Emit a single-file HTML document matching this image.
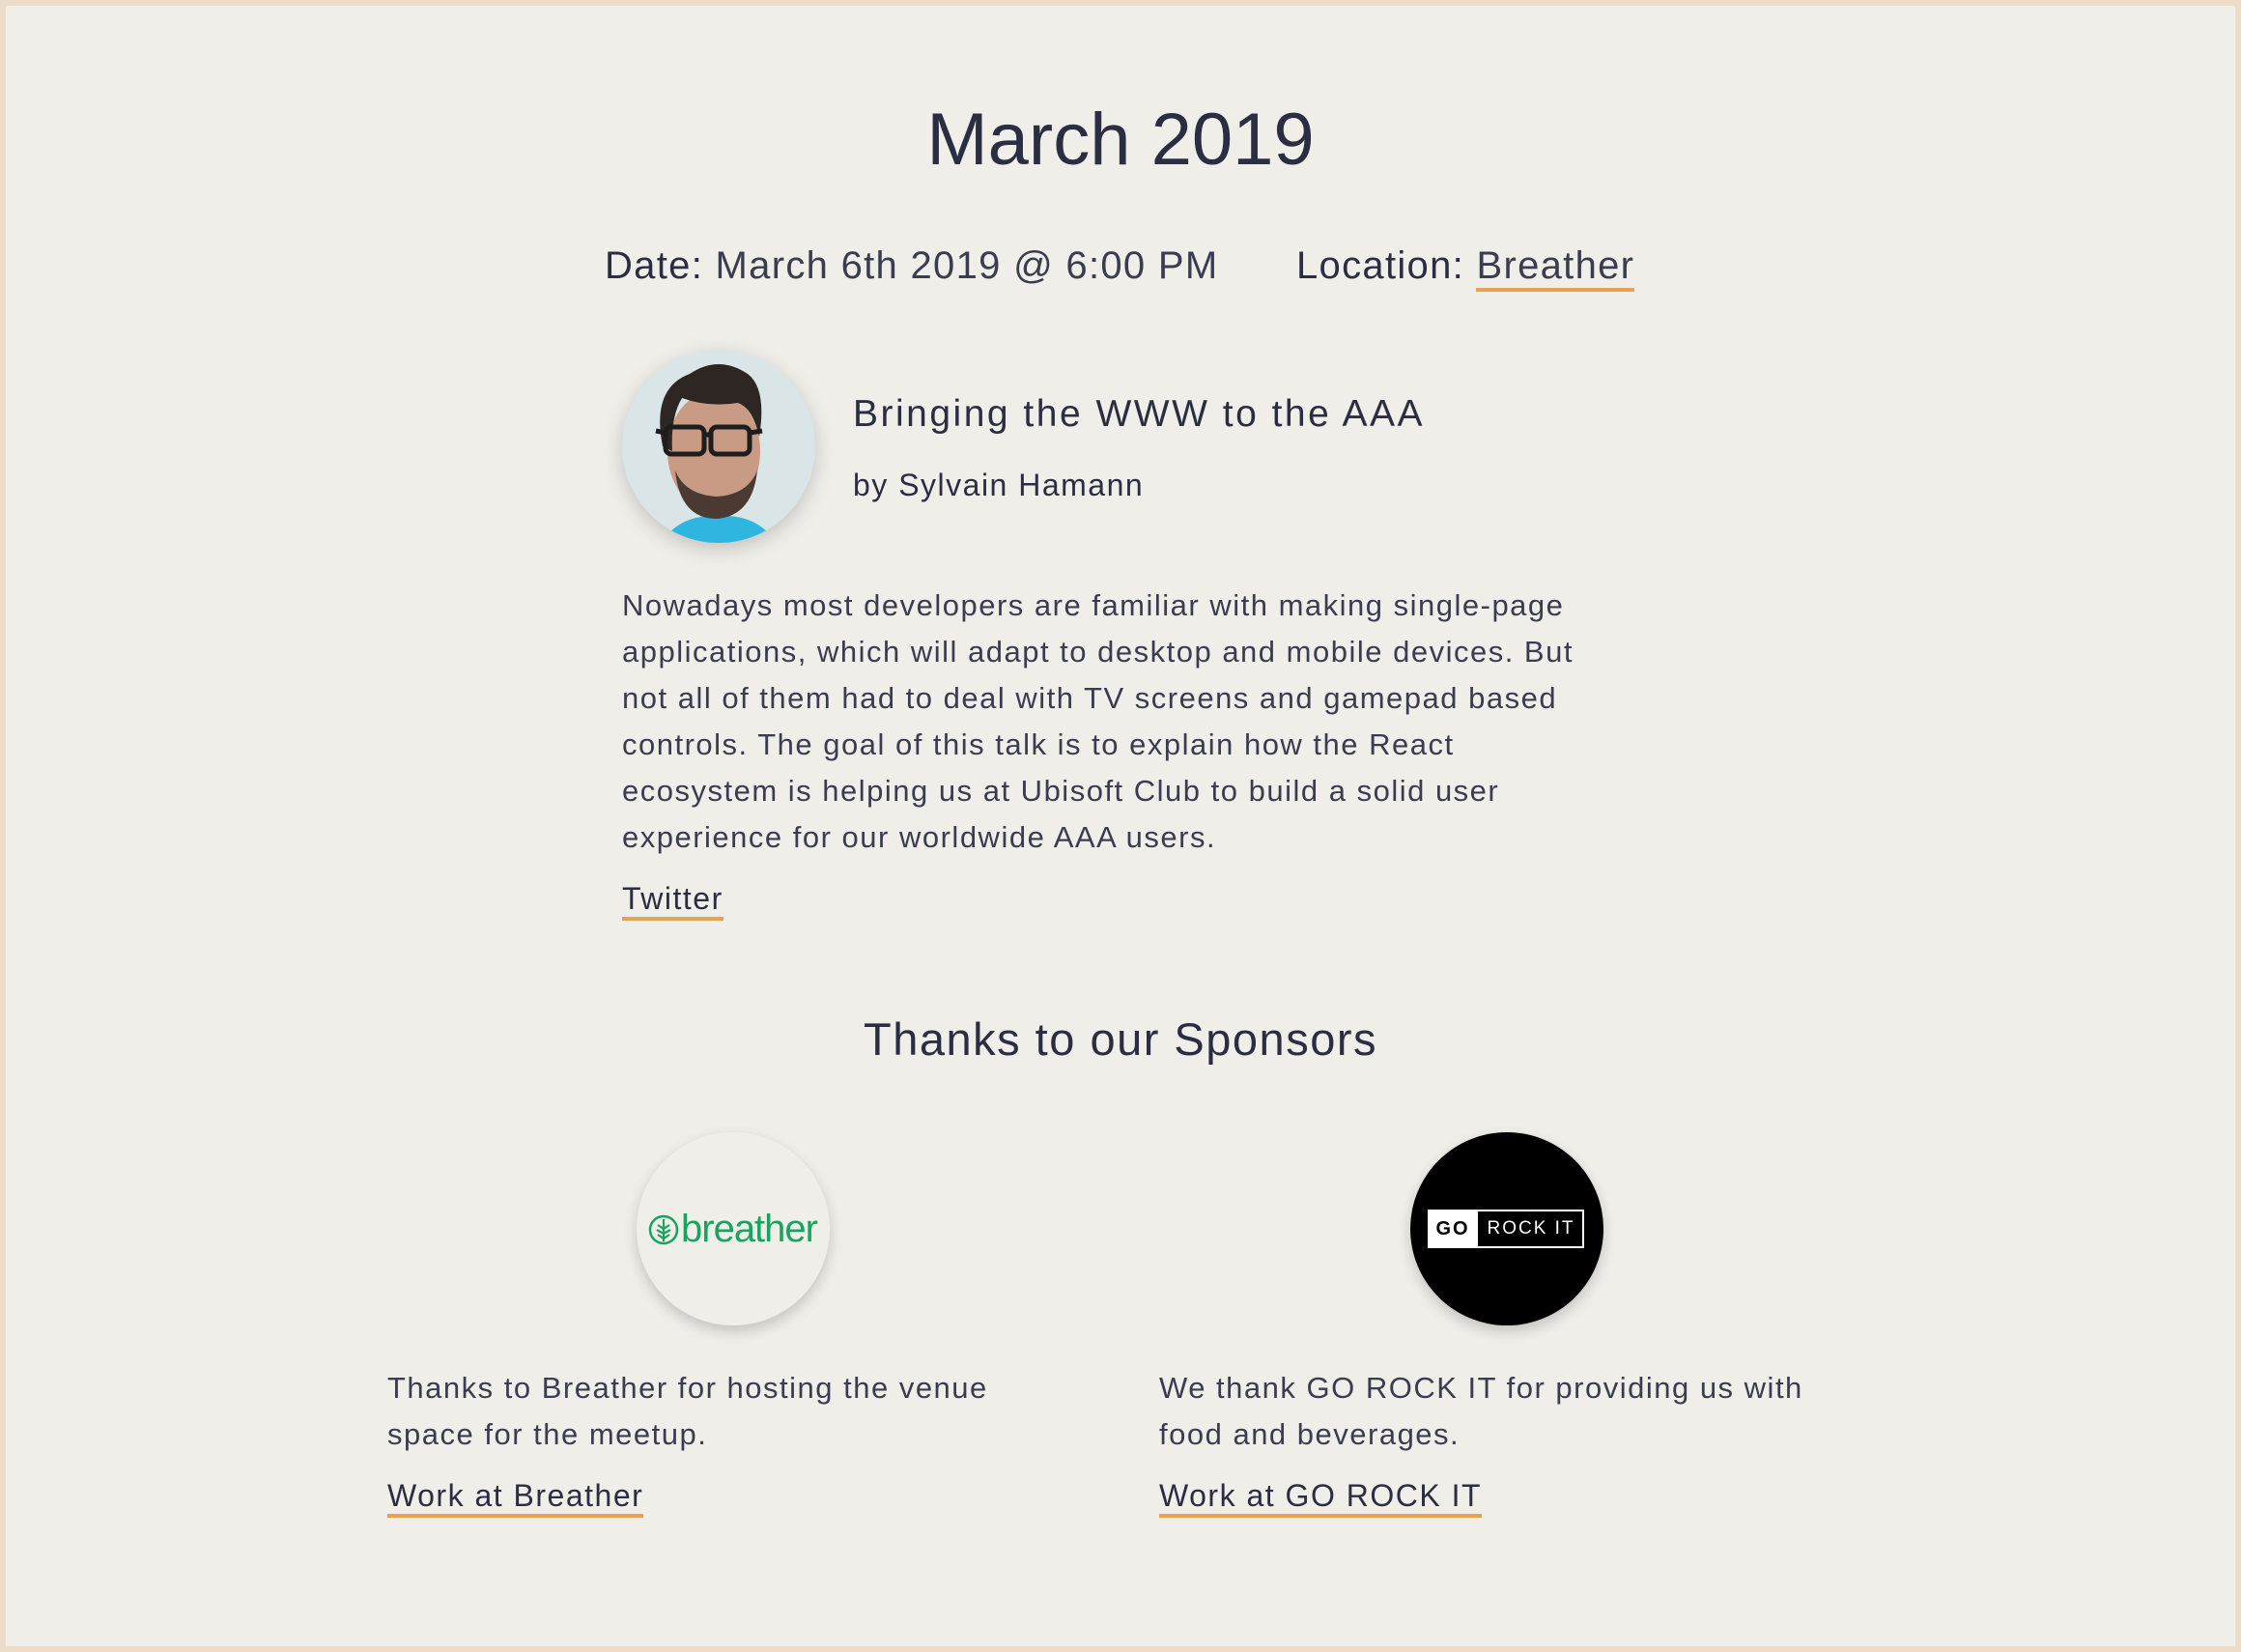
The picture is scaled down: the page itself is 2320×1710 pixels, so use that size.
<!DOCTYPE html>
<html><head><meta charset="utf-8"><style>
html,body{margin:0;padding:0}
body{width:2320px;height:1710px;background:#f0eee9;position:relative;overflow:hidden;font-family:"Liberation Sans",sans-serif;color:#2b2d42;letter-spacing:1.5px}
.frame{position:absolute;left:0;top:0;width:2308px;height:1698px;border:6px solid #ecdcc8}
.a{position:absolute;white-space:nowrap}
.u{border-bottom:4px solid #e3a352;padding-bottom:1px}
p{margin:0}
</style></head><body>
<div class="frame"></div>
<div class="a" style="left:0;width:2320px;text-align:center;top:100px;font-size:76px;line-height:90px;letter-spacing:0">March 2019</div>
<div class="a" style="left:626px;top:250px;font-size:40px;line-height:50px;letter-spacing:1.3px"><span style="font-weight:500">Date:</span> <span style="color:#3a3c50">March 6th 2019 @ 6:00 PM</span></div>
<div class="a" style="left:1342px;top:250px;font-size:40px;line-height:50px;letter-spacing:1.3px">Location: <span class="u" style="color:#3a3c50">Breather</span></div>

<svg class="a" style="left:644px;top:362px;filter:drop-shadow(0 6px 10px rgba(0,0,0,.18))" width="200" height="200" viewBox="0 0 200 200">
<defs><clipPath id="c"><circle cx="100" cy="100" r="100"/></clipPath></defs>
<g clip-path="url(#c)">
<rect width="200" height="200" fill="#d9e5e6"/>
<path d="M40 200 Q60 170 100 172 Q140 170 160 200Z" fill="#2fb6e0"/>
<ellipse cx="95" cy="105" rx="48" ry="62" fill="#c99a84"/>
<path d="M55 125 Q60 175 98 175 Q135 172 140 125 Q130 150 98 152 Q65 150 55 125Z" fill="#4a3a32"/>
<path d="M42 100 Q30 40 70 25 Q100 5 130 25 Q150 40 142 90 Q135 60 120 55 Q90 60 62 50 Q50 70 52 105Z" fill="#2e2622"/>
<rect x="45" y="80" width="40" height="28" rx="6" fill="none" stroke="#1d1d1d" stroke-width="5"/>
<rect x="92" y="80" width="40" height="28" rx="6" fill="none" stroke="#1d1d1d" stroke-width="5"/>
<path d="M85 88 L92 88 M132 86 L145 84 M45 86 L35 84" stroke="#1d1d1d" stroke-width="5"/>
</g></svg>

<div class="a" style="left:883px;top:404px;font-size:39px;line-height:50px;font-weight:500;letter-spacing:2.5px">Bringing the WWW to the AAA</div>
<div class="a" style="left:883px;top:482px;font-size:32px;line-height:40px;">by Sylvain Hamann</div>

<div class="a" style="left:644px;top:603px;font-size:31px;line-height:48px;color:#3a3c50">
Nowadays most developers are familiar with making single-page<br>
applications, which will adapt to desktop and mobile devices. But<br>
not all of them had to deal with TV screens and gamepad based<br>
controls. The goal of this talk is to explain how the React<br>
ecosystem is helping us at Ubisoft Club to build a solid user<br>
experience for our worldwide AAA users.</div>
<div class="a" style="left:644px;top:910px;font-size:32px;line-height:40px;"><span class="u">Twitter</span></div>

<div class="a" style="left:0;width:2320px;text-align:center;top:1048px;font-size:47px;line-height:56px;">Thanks to our Sponsors</div>

<div class="a" style="left:659px;top:1172px;width:200px;height:200px;border-radius:50%;background:#f0eee9;box-shadow:0 6px 14px rgba(0,0,0,.18);letter-spacing:0">
<svg style="position:absolute;left:12px;top:85px" width="32" height="32" viewBox="0 0 32 32"><circle cx="16" cy="16" r="14" fill="none" stroke="#1aa260" stroke-width="2.5"/><path d="M16 5 V28 M10 11 L16 15 L22 11 M9 16 L16 20 L23 16 M10 21 L16 25 L22 21" fill="none" stroke="#1aa260" stroke-width="2.2"/></svg>
<div class="a" style="left:46px;top:76px;font-size:40px;line-height:48px;color:#1aa260;letter-spacing:-1px">breather</div>
</div>

<div class="a" style="left:1460px;top:1172px;width:200px;height:200px;border-radius:50%;background:#000;box-shadow:0 6px 14px rgba(0,0,0,.18)">
<div class="a" style="left:18px;top:80px;width:162px;height:40px;border:2px solid #fff;box-sizing:border-box"></div>
<div class="a" style="left:18px;top:80px;width:52px;height:40px;background:#fff;color:#000;font-weight:700;font-size:20px;line-height:40px;text-align:center;letter-spacing:2px">GO</div>
<div class="a" style="left:70px;top:80px;width:110px;height:40px;color:#fff;font-size:19px;line-height:40px;text-align:center;letter-spacing:2px">ROCK IT</div>
</div>

<div class="a" style="left:401px;top:1413px;font-size:31px;line-height:48px;color:#3a3c50">Thanks to Breather for hosting the venue<br>space for the meetup.</div>
<div class="a" style="left:401px;top:1528px;font-size:32px;line-height:40px;"><span class="u">Work at Breather</span></div>

<div class="a" style="left:1200px;top:1413px;font-size:31px;line-height:48px;color:#3a3c50">We thank GO ROCK IT for providing us with<br>food and beverages.</div>
<div class="a" style="left:1200px;top:1528px;font-size:32px;line-height:40px;"><span class="u">Work at GO ROCK IT</span></div>
</body></html>
